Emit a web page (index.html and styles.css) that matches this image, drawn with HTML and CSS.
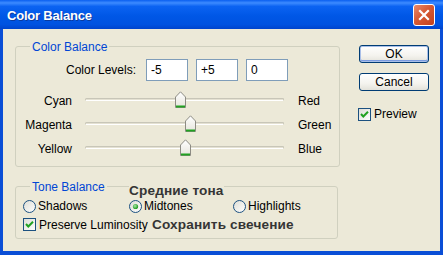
FILE: index.html
```html
<!DOCTYPE html>
<html lang="en">
<head>
    <meta charset="UTF-8">
    <title>Color Balance</title>
    <link rel="stylesheet" href="styles.css">
</head>
<body>
    <div class="window">
        <div class="titlebar">
            <span class="title">Color Balance</span>
            <span class="close">
                <svg width="20" height="20" viewBox="0 0 20 20">
                    <path d="M6 6 L14 14 M14 6 L6 14" stroke="#fff" stroke-width="2.2" stroke-linecap="square"/>
                </svg>
            </span>
        </div>
        <div class="client">
            <div class="groups">
                <div class="group balance">
                    <span class="legend">Color Balance</span>
                    <div class="levels">
                        <label class="levels-label">Color Levels:</label>
                        <input class="field" type="text" value="-5">
                        <input class="field" type="text" value="+5">
                        <input class="field" type="text" value="0">
                    </div>
                    <div class="sliders">
                        <span class="side-left">Cyan</span>
                        <div class="slider">
                            <div class="track"></div>
                            <svg class="thumb" style="left: 90px" width="11" height="18" viewBox="0 0 11 18"><use href="#thumb"/></svg>
                        </div>
                        <span class="side-right">Red</span>

                        <span class="side-left">Magenta</span>
                        <div class="slider">
                            <div class="track"></div>
                            <svg class="thumb" style="left: 100px" width="11" height="18" viewBox="0 0 11 18"><use href="#thumb"/></svg>
                        </div>
                        <span class="side-right">Green</span>

                        <span class="side-left">Yellow</span>
                        <div class="slider">
                            <div class="track"></div>
                            <svg class="thumb" style="left: 95px" width="11" height="18" viewBox="0 0 11 18"><use href="#thumb"/></svg>
                        </div>
                        <span class="side-right">Blue</span>
                    </div>
                </div>

                <div class="group tone">
                    <span class="legend">Tone Balance</span>
                    <span class="note note-mid">Средние тона</span>
                    <div class="radios">
                        <span class="option">
                            <svg width="13" height="13" viewBox="0 0 13 13"><use href="#radio"/></svg>
                            Shadows
                        </span>
                        <span class="option">
                            <svg width="13" height="13" viewBox="0 0 13 13"><use href="#radio"/><use href="#radio-dot"/></svg>
                            Midtones
                        </span>
                        <span class="option">
                            <svg width="13" height="13" viewBox="0 0 13 13"><use href="#radio"/></svg>
                            Highlights
                        </span>
                    </div>
                    <div class="preserve">
                        <span class="option check-option">
                            <svg width="13" height="13" viewBox="0 0 13 13"><use href="#checkbox"/></svg>
                            Preserve Luminosity
                        </span>
                        <span class="note">Сохранить свечение</span>
                    </div>
                </div>
            </div>

            <div class="actions">
                <button class="btn btn-default">OK</button>
                <button class="btn">Cancel</button>
                <span class="option preview">
                    <svg width="13" height="13" viewBox="0 0 13 13"><use href="#checkbox"/></svg>
                    Preview
                </span>
            </div>
        </div>
    </div>

    <svg class="defs" width="0" height="0">
        <defs>
            <linearGradient id="thumbFill" x1="0" y1="0" x2="0" y2="1">
                <stop offset="0" stop-color="#ffffff"/>
                <stop offset="1" stop-color="#e6e5dc"/>
            </linearGradient>
            <linearGradient id="boxFill" x1="0" y1="0" x2="1" y2="1">
                <stop offset="0" stop-color="#dcdcd4"/>
                <stop offset="1" stop-color="#ffffff"/>
            </linearGradient>
            <radialGradient id="dotFill" cx="0.4" cy="0.4" r="0.6">
                <stop offset="0" stop-color="#a6e8a6"/>
                <stop offset="1" stop-color="#1e9a1e"/>
            </radialGradient>
            <g id="thumb">
                <path d="M0.5 6 L5.5 0.8 L10.5 6 V16.5 H0.5 Z" fill="url(#thumbFill)" stroke="#8d8c84"/>
                <path d="M1 15.5 H10" stroke="#21a121" stroke-width="2"/>
            </g>
            <g id="checkbox">
                <rect x="0.5" y="0.5" width="12" height="12" fill="url(#boxFill)" stroke="#1c5180"/>
                <path d="M3 6 L5.3 8.5 L10 3.8" fill="none" stroke="#21a121" stroke-width="2"/>
            </g>
            <g id="radio">
                <circle cx="6.5" cy="6.5" r="6" fill="url(#boxFill)" stroke="#1c5180"/>
            </g>
            <g id="radio-dot">
                <circle cx="6.5" cy="6.5" r="2.6" fill="url(#dotFill)"/>
            </g>
        </defs>
    </svg>
</body>
</html>
```

FILE: styles.css
```css
body {
    margin: 0;
    font-family: "Liberation Sans", Arial, sans-serif;
    font-size: 12px;
    color: #000;
}
.window {
    width: 443px;
    height: 255px;
    display: flex;
    flex-direction: column;
    background: #0a4ed6;
    box-sizing: border-box;
}
.titlebar {
    height: 29px;
    flex: 0 0 29px;
    display: flex;
    align-items: center;
    justify-content: space-between;
    padding: 0 8px 0 7px;
    background: linear-gradient(#0a5ff0 0%, #3d8bff 10%, #0b63f2 22%, #0057e6 55%, #0052e0 85%, #0044cc 100%);
}
.title {
    color: #fff;
    font-weight: bold;
    font-size: 13px;
    letter-spacing: -0.2px;
    text-shadow: 1px 1px 0 #0b3a9e;
    margin-top: 1px;
}
.close {
    width: 20px;
    height: 20px;
    display: flex;
    border: 1px solid #fff;
    border-radius: 3px;
    background: linear-gradient(135deg, #e98a6c 0%, #d65a35 45%, #c2411c 100%);
    margin-top: 1px;
}
.client {
    flex: 1;
    margin: 0 3px 4px;
    background: #ece9d8;
    display: flex;
    padding: 17px 0 0 12px;
    gap: 19px;
}
.groups {
    display: flex;
    flex-direction: column;
    gap: 19px;
}
.group {
    position: relative;
    width: 323px;
    border: 1px solid #d0d0bf;
    border-radius: 3px;
}
.legend {
    position: absolute;
    top: -7px;
    left: 14px;
    padding: 0 2px;
    line-height: 14px;
    color: #0046d5;
    background: #ece9d8;
}
.balance {
    padding: 12px 0 5px;
}
.levels {
    display: flex;
    align-items: center;
    gap: 8px;
}
.levels-label {
    width: 120px;
    text-align: right;
    margin-right: 2px;
}
.field {
    width: 42px;
    height: 22px;
    box-sizing: border-box;
    border: 1px solid #7f9db9;
    padding: 0 4px;
    font-family: inherit;
    font-size: 12px;
    background: #fff;
    margin: 0;
}
.sliders {
    margin-top: 8px;
    display: grid;
    grid-template-columns: 56px 199px 1fr;
    grid-auto-rows: 24px;
    column-gap: 13px;
    align-items: center;
}
.side-left {
    text-align: right;
}
.side-right {
    padding-left: 1px;
}
.slider {
    position: relative;
    height: 24px;
}
.track {
    position: absolute;
    top: 9px;
    left: 0;
    right: 0;
    height: 3px;
    border: 1px solid #c8c6b8;
    border-bottom-color: #fff;
    border-radius: 2px;
    background: #e4e1d2;
    box-sizing: border-box;
}
.thumb {
    position: absolute;
    top: 2px;
}
.tone {
    padding: 12px 0 7px 7px;
    box-sizing: border-box;
}
.note {
    font-weight: bold;
    font-size: 13.6px;
    letter-spacing: 0.15px;
    line-height: 15px;
    color: #353535;
    background: #ece9d8;
}
.note-mid {
    position: absolute;
    top: -4px;
    left: 113px;
}
.radios {
    display: grid;
    grid-template-columns: 106px 104px auto;
    height: 14px;
    align-items: center;
}
.option {
    display: flex;
    align-items: center;
    gap: 2px;
    white-space: nowrap;
    line-height: 14px;
}
.preserve {
    display: flex;
    align-items: center;
    height: 13px;
    margin-top: 5px;
}
.check-option {
    flex: 0 0 129px;
    gap: 3px;
}
.actions {
    display: flex;
    flex-direction: column;
    margin-top: -1px;
}
.btn {
    width: 70px;
    height: 18px;
    padding: 0;
    font-family: inherit;
    font-size: 12px;
    color: #000;
    border: 1px solid #003c74;
    border-radius: 3px;
    background: linear-gradient(#ffffff 0%, #f4f3ee 60%, #e3e2da 100%);
    margin-bottom: 10px;
    line-height: 14px;
}
.btn-default {
    box-shadow: inset 0 0 0 1px #a9bfe8, inset 0 -1px 0 1px #7b9be0;
}
.preview {
    margin: 6px 0 0 -1px;
    gap: 3px;
}
.defs {
    position: absolute;
}
```
